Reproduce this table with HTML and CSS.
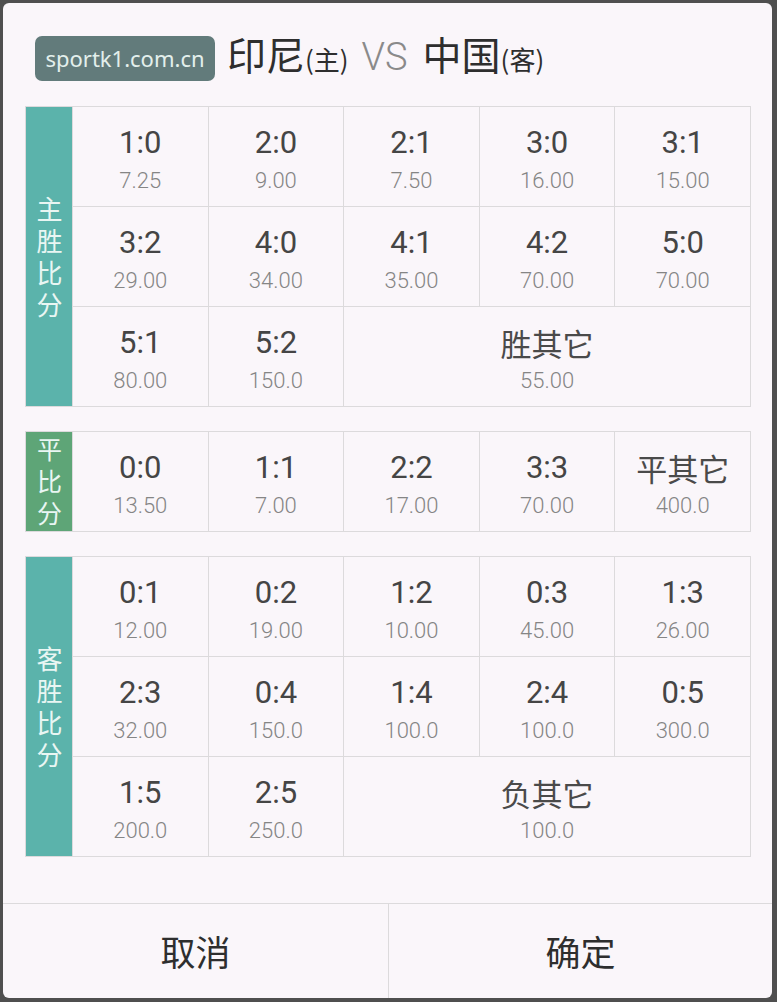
FILE: index.html
```html
<!DOCTYPE html>
<html lang="zh">
<head>
<meta charset="utf-8">
<link rel="stylesheet" href="styles.css">
</head>
<body>
<div class="dialog">
  <div class="header">
    <span class="badge">sportk1.com.cn</span>
    <div class="title">
      <span class="team">印尼</span><span class="tag">(主)</span>
      <span class="vs">VS</span>
      <span class="team">中国</span><span class="tag">(客)</span>
    </div>
  </div>

  <div class="board">
    <div class="grid rows3">
      <div class="label teal"><span class="vtext">主胜比分</span></div>
      <div class="cell"><b>1:0</b><i>7.25</i></div>
      <div class="cell"><b>2:0</b><i>9.00</i></div>
      <div class="cell"><b>2:1</b><i>7.50</i></div>
      <div class="cell"><b>3:0</b><i>16.00</i></div>
      <div class="cell"><b>3:1</b><i>15.00</i></div>
      <div class="cell"><b>3:2</b><i>29.00</i></div>
      <div class="cell"><b>4:0</b><i>34.00</i></div>
      <div class="cell"><b>4:1</b><i>35.00</i></div>
      <div class="cell"><b>4:2</b><i>70.00</i></div>
      <div class="cell"><b>5:0</b><i>70.00</i></div>
      <div class="cell"><b>5:1</b><i>80.00</i></div>
      <div class="cell"><b>5:2</b><i>150.0</i></div>
      <div class="cell wide"><b class="cn">胜其它</b><i>55.00</i></div>
    </div>

    <div class="grid rows1">
      <div class="label green"><span class="vtext">平比分</span></div>
      <div class="cell"><b>0:0</b><i>13.50</i></div>
      <div class="cell"><b>1:1</b><i>7.00</i></div>
      <div class="cell"><b>2:2</b><i>17.00</i></div>
      <div class="cell"><b>3:3</b><i>70.00</i></div>
      <div class="cell"><b class="cn">平其它</b><i>400.0</i></div>
    </div>

    <div class="grid rows3">
      <div class="label teal"><span class="vtext">客胜比分</span></div>
      <div class="cell"><b>0:1</b><i>12.00</i></div>
      <div class="cell"><b>0:2</b><i>19.00</i></div>
      <div class="cell"><b>1:2</b><i>10.00</i></div>
      <div class="cell"><b>0:3</b><i>45.00</i></div>
      <div class="cell"><b>1:3</b><i>26.00</i></div>
      <div class="cell"><b>2:3</b><i>32.00</i></div>
      <div class="cell"><b>0:4</b><i>150.0</i></div>
      <div class="cell"><b>1:4</b><i>100.0</i></div>
      <div class="cell"><b>2:4</b><i>100.0</i></div>
      <div class="cell"><b>0:5</b><i>300.0</i></div>
      <div class="cell"><b>1:5</b><i>200.0</i></div>
      <div class="cell"><b>2:5</b><i>250.0</i></div>
      <div class="cell wide"><b class="cn">负其它</b><i>100.0</i></div>
    </div>
  </div>

  <div class="footer">
    <div class="btn">取消</div>
    <div class="btn">确定</div>
  </div>
</div>
</body>
</html>
```

FILE: styles.css
```css
html, body {
  margin: 0;
  padding: 0;
  background: #4f4f4f;
}
body {
  width: 777px;
  height: 1002px;
  padding: 3px 5px 4px 3px;
  box-sizing: border-box;
  font-family: Roboto, "Noto Sans CJK SC", sans-serif;
}
.dialog {
  height: 995px;
  background: #faf6fa;
  border-radius: 6px;
  display: flex;
  flex-direction: column;
  overflow: hidden;
}
.header {
  display: flex;
  align-items: center;
  gap: 12px;
  padding: 32px 0 0 32px;
  height: 46px;
}
.badge {
  display: flex;
  align-items: center;
  justify-content: center;
  width: 180px;
  height: 45px;
  background: #627b7b;
  border-radius: 7px;
  color: #e3efec;
  font-family: "Noto Sans", sans-serif;
  font-size: 22px;
}
.title {
  display: flex;
  align-items: baseline;
  color: #2e2e2e;
  font-family: "Noto Sans CJK SC", sans-serif;
  margin-top: -10px;
}
.team {
  font-size: 39px;
  font-weight: 400;
}
.tag {
  font-size: 26px;
  margin-right: 13px;
}
.vs {
  font-family: Roboto, sans-serif;
  font-weight: 300;
  font-size: 38px;
  color: #8a8a8a;
  margin-right: 15px;
}
.board {
  display: flex;
  flex-direction: column;
  gap: 24px;
  padding: 25px 21px 0 22px;
}
.grid {
  display: grid;
  grid-template-columns: 46px repeat(5, 1fr);
  gap: 1px;
  background: #dcdadc;
  border: 1px solid #dcdadc;
}
.rows3 { grid-template-rows: repeat(3, 99px); }
.rows1 { grid-template-rows: 99px; }
.label {
  grid-row: 1 / -1;
  display: flex;
  align-items: center;
  justify-content: center;
  color: #e9f6f3;
  font-family: "Noto Sans CJK SC", sans-serif;
}
.vtext {
  writing-mode: vertical-rl;
  text-orientation: upright;
  font-size: 26px;
  letter-spacing: 6px;
  line-height: 1;
  margin-bottom: -6px;
}
.rows1 .vtext { font-size: 25px; letter-spacing: 7px; margin-bottom: -7px; }
.teal { background: #5bb3ab; }
.green { background: #5ea577; }
.cell {
  background: #faf6fa;
  display: flex;
  flex-direction: column;
  align-items: center;
  justify-content: center;
  padding-top: 13px;
  box-sizing: border-box;
}
.cell.wide { grid-column: span 3; }
.cell b {
  font-weight: 400;
  font-size: 31px;
  line-height: 36px;
  color: #454545;
}
.cell b.cn {
  font-family: "Noto Sans CJK SC", sans-serif;
  font-size: 31px;
  color: #4a4a4a;
}
.cell i {
  font-style: normal;
  font-weight: 300;
  font-size: 22px;
  line-height: 40px;
  color: #858585;
}
.footer {
  margin-top: auto;
  height: 94px;
  border-top: 1px solid #dcdadc;
  display: grid;
  grid-template-columns: 385px 1fr;
}
.btn {
  display: flex;
  align-items: center;
  justify-content: center;
  font-family: "Noto Sans CJK SC", sans-serif;
  font-size: 35px;
  color: #2e2e2e;
  padding-bottom: 2px;
}
.btn + .btn { border-left: 1px solid #dcdadc; }
```
